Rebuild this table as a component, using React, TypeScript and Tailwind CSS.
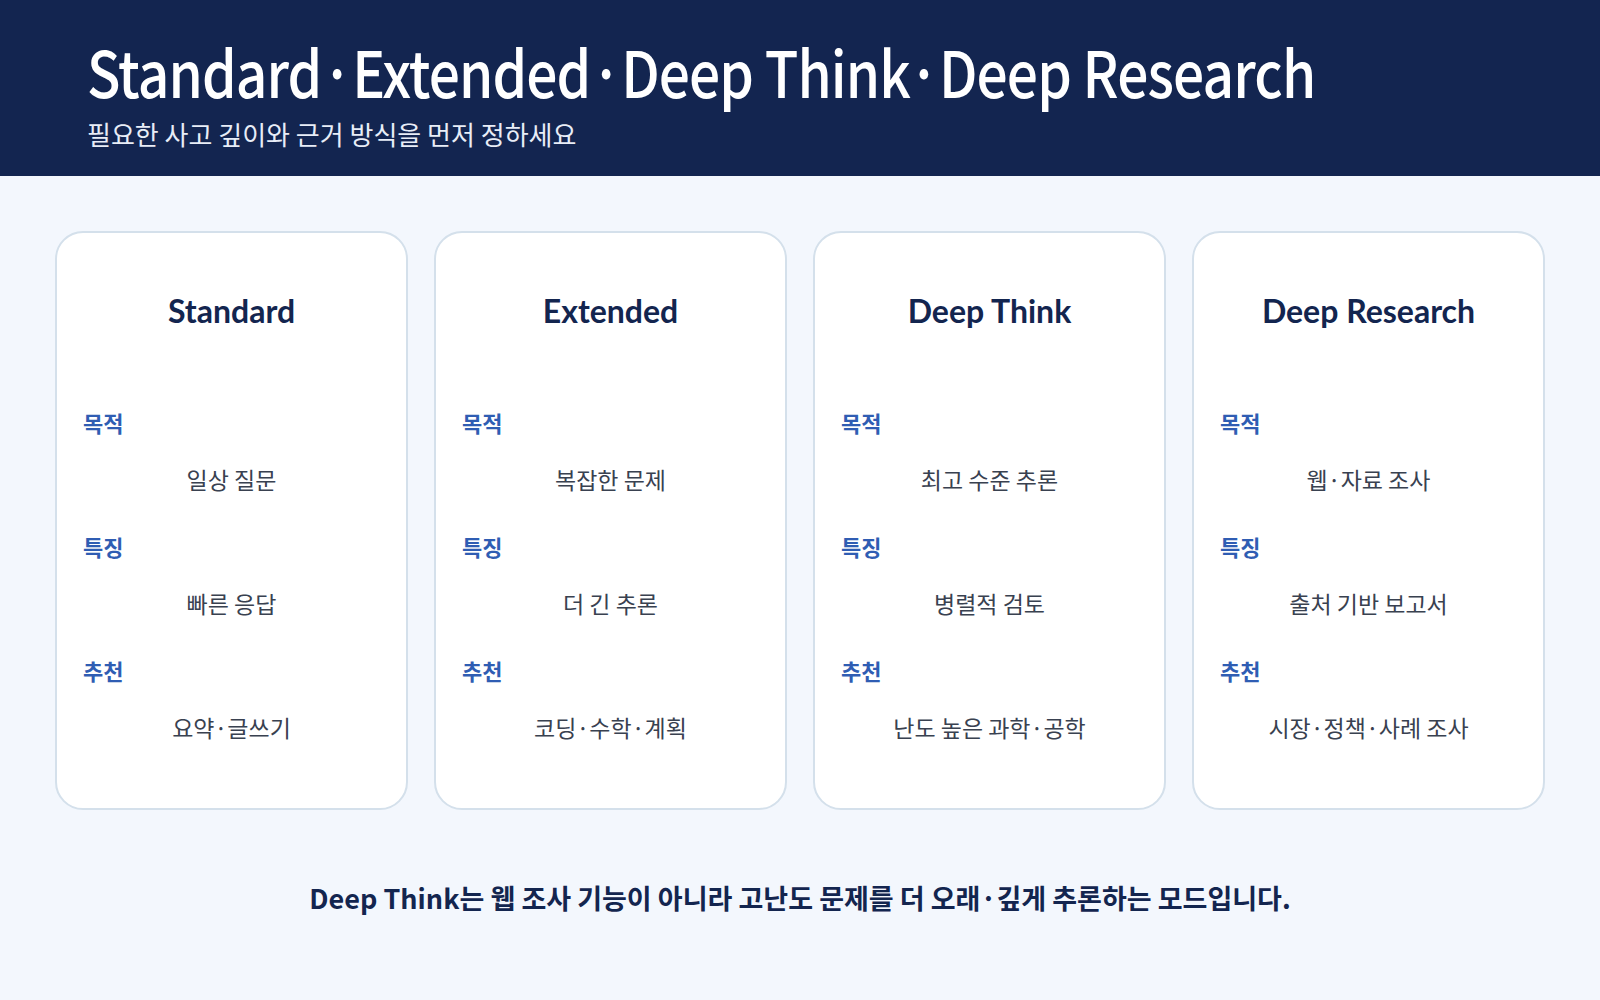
const MODES = [
  { name: 'Standard', purpose: '일상 질문', feature: '빠른 응답', recommend: '요약·글쓰기' },
  { name: 'Extended', purpose: '복잡한 문제', feature: '더 긴 추론', recommend: '코딩·수학·계획' },
  { name: 'Deep Think', purpose: '최고 수준 추론', feature: '병렬적 검토', recommend: '난도 높은 과학·공학' },
  { name: 'Deep Research', purpose: '웹·자료 조사', feature: '출처 기반 보고서', recommend: '시장·정책·사례 조사' },
];

const KR = "font-['Noto_Sans_CJK_KR','Noto_Sans',sans-serif]";

function Row({ label, value, first }: { label: string; value: string; first?: boolean }) {
  return (
    <div className={first ? 'mt-[76px]' : 'mt-[37px]'}>
      <div className="text-[22px] leading-[30px] font-bold text-[#2f5db3]">{label}</div>
      <div className="mt-[27px] text-center text-[23px] leading-[30px] text-[#394150]">{value}</div>
    </div>
  );
}

export default function App() {
  return (
    <div className={`w-[1600px] h-[1000px] bg-[#f3f7fd] ${KR}`}>
      {/* ── Header ─────────────────────────────── */}
      <header className="h-[176px] bg-[#132550] px-[87px] pt-[35px]">
        <h1 className="text-white text-[64px] leading-[70px] font-medium tracking-[-1px] whitespace-nowrap origin-left scale-x-[0.86]">
          Standard·Extended·Deep Think·Deep Research
        </h1>
        <p className="mt-[12px] text-[#e8edf7] text-[26px] leading-[34px]">필요한 사고 깊이와 근거 방식을 먼저 정하세요</p>
      </header>

      {/* ── Mode cards ─────────────────────────── */}
      <section className="mt-[55px] px-[55px] grid grid-cols-4 gap-[26px]">
        {MODES.map((m) => (
          <div key={m.name} className="h-[579px] rounded-[28px] border-2 border-[#d4e0eb] bg-white px-[26px] pt-[58px]">
            <h2 className="text-center text-[32px] leading-[40px] font-bold text-[#13254f] font-['Lato','Noto_Sans_CJK_KR',sans-serif]">
              {m.name}
            </h2>
            <Row label="목적" value={m.purpose} first />
            <Row label="특징" value={m.feature} />
            <Row label="추천" value={m.recommend} />
          </div>
        ))}
      </section>

      {/* ── Footnote ───────────────────────────── */}
      <p className="mt-[68px] text-center text-[27px] leading-[40px] font-bold text-[#13254f]">
        Deep Think는 웹 조사 기능이 아니라 고난도 문제를 더 오래·깊게 추론하는 모드입니다.
      </p>
    </div>
  );
}
